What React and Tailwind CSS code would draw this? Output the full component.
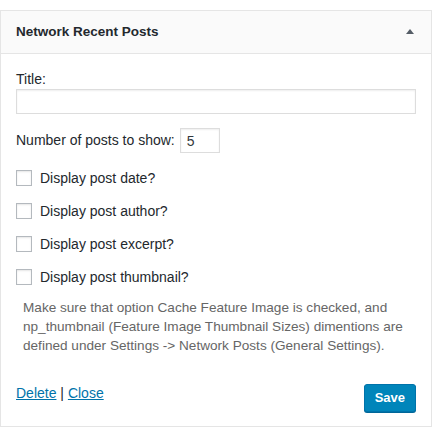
import React from "react";

const options = [
  "Display post date?",
  "Display post author?",
  "Display post excerpt?",
  "Display post thumbnail?",
];

export default function App() {
  return (
    <div className="w-[432px] h-[438px] bg-white pt-[10px] font-['Liberation_Sans',Arial,sans-serif] text-[14px] text-[#23282d]">
      <div className="border border-[#e5e5e5] bg-white">
        {/* widget header */}
        <div className="h-[43px] bg-[#fafafa] border-b border-[#e5e5e5] flex items-center justify-between pl-[15px] pr-[17px]">
          <h3 className="font-bold text-[13.5px] text-[#23282d] mt-[1px]">Network Recent Posts</h3>
          <svg width="8" height="5" viewBox="0 0 8 5" className="mb-[1px]">
            <path d="M4 0 L8 5 L0 5 Z" fill="#555d66" />
          </svg>
        </div>

        {/* widget form */}
        <div className="px-[15px] pt-[15px] pb-[14px]">
          <label className="block leading-[20px]">Title:</label>
          <input
            type="text"
            className="block w-full h-[25px] border border-[#dddddd] shadow-[inset_0_1px_2px_rgba(0,0,0,0.07)] outline-none"
          />

          <div className="flex items-center mt-[14px] h-[25px]">
            <span>Number of posts to show:</span>
            <input
              type="text"
              defaultValue="5"
              className="ml-[5px] w-[40px] h-[25px] border border-[#dddddd] shadow-[inset_0_1px_2px_rgba(0,0,0,0.07)] px-[6px] outline-none text-[#32373c]"
            />
          </div>

          <div className="flex flex-col gap-[17px] mt-[17px]">
            {options.map((label) => (
              <label key={label} className="flex items-center h-[16px]">
                <span className="w-[16px] h-[16px] border border-[#b4b9be] shadow-[inset_0_1px_2px_rgba(0,0,0,0.1)] bg-white shrink-0" />
                <span className="ml-[8px]">{label}</span>
              </label>
            ))}
          </div>

          <p className="mt-[13px] pl-[7px] text-[#666666] text-[13.6px] leading-[19px]">
            Make sure that option Cache Feature Image is checked, and np_thumbnail (Feature Image Thumbnail Sizes) dimentions are defined under Settings -&gt; Network Posts (General Settings).
          </p>

          <div className="flex justify-between items-start mt-[29px]">
            <div className="-mt-[1px]">
              <a href="#" className="text-[#0073aa] underline">Delete</a>
              <span className="text-[#23282d]"> | </span>
              <a href="#" className="text-[#0073aa] underline">Close</a>
            </div>
            <button className="h-[28px] px-[10px] rounded-[3px] bg-[#0085ba] border border-[#0073aa] shadow-[0_1px_0_#006799] text-white font-bold text-[13px]">
              Save
            </button>
          </div>
        </div>
      </div>
    </div>
  );
}
